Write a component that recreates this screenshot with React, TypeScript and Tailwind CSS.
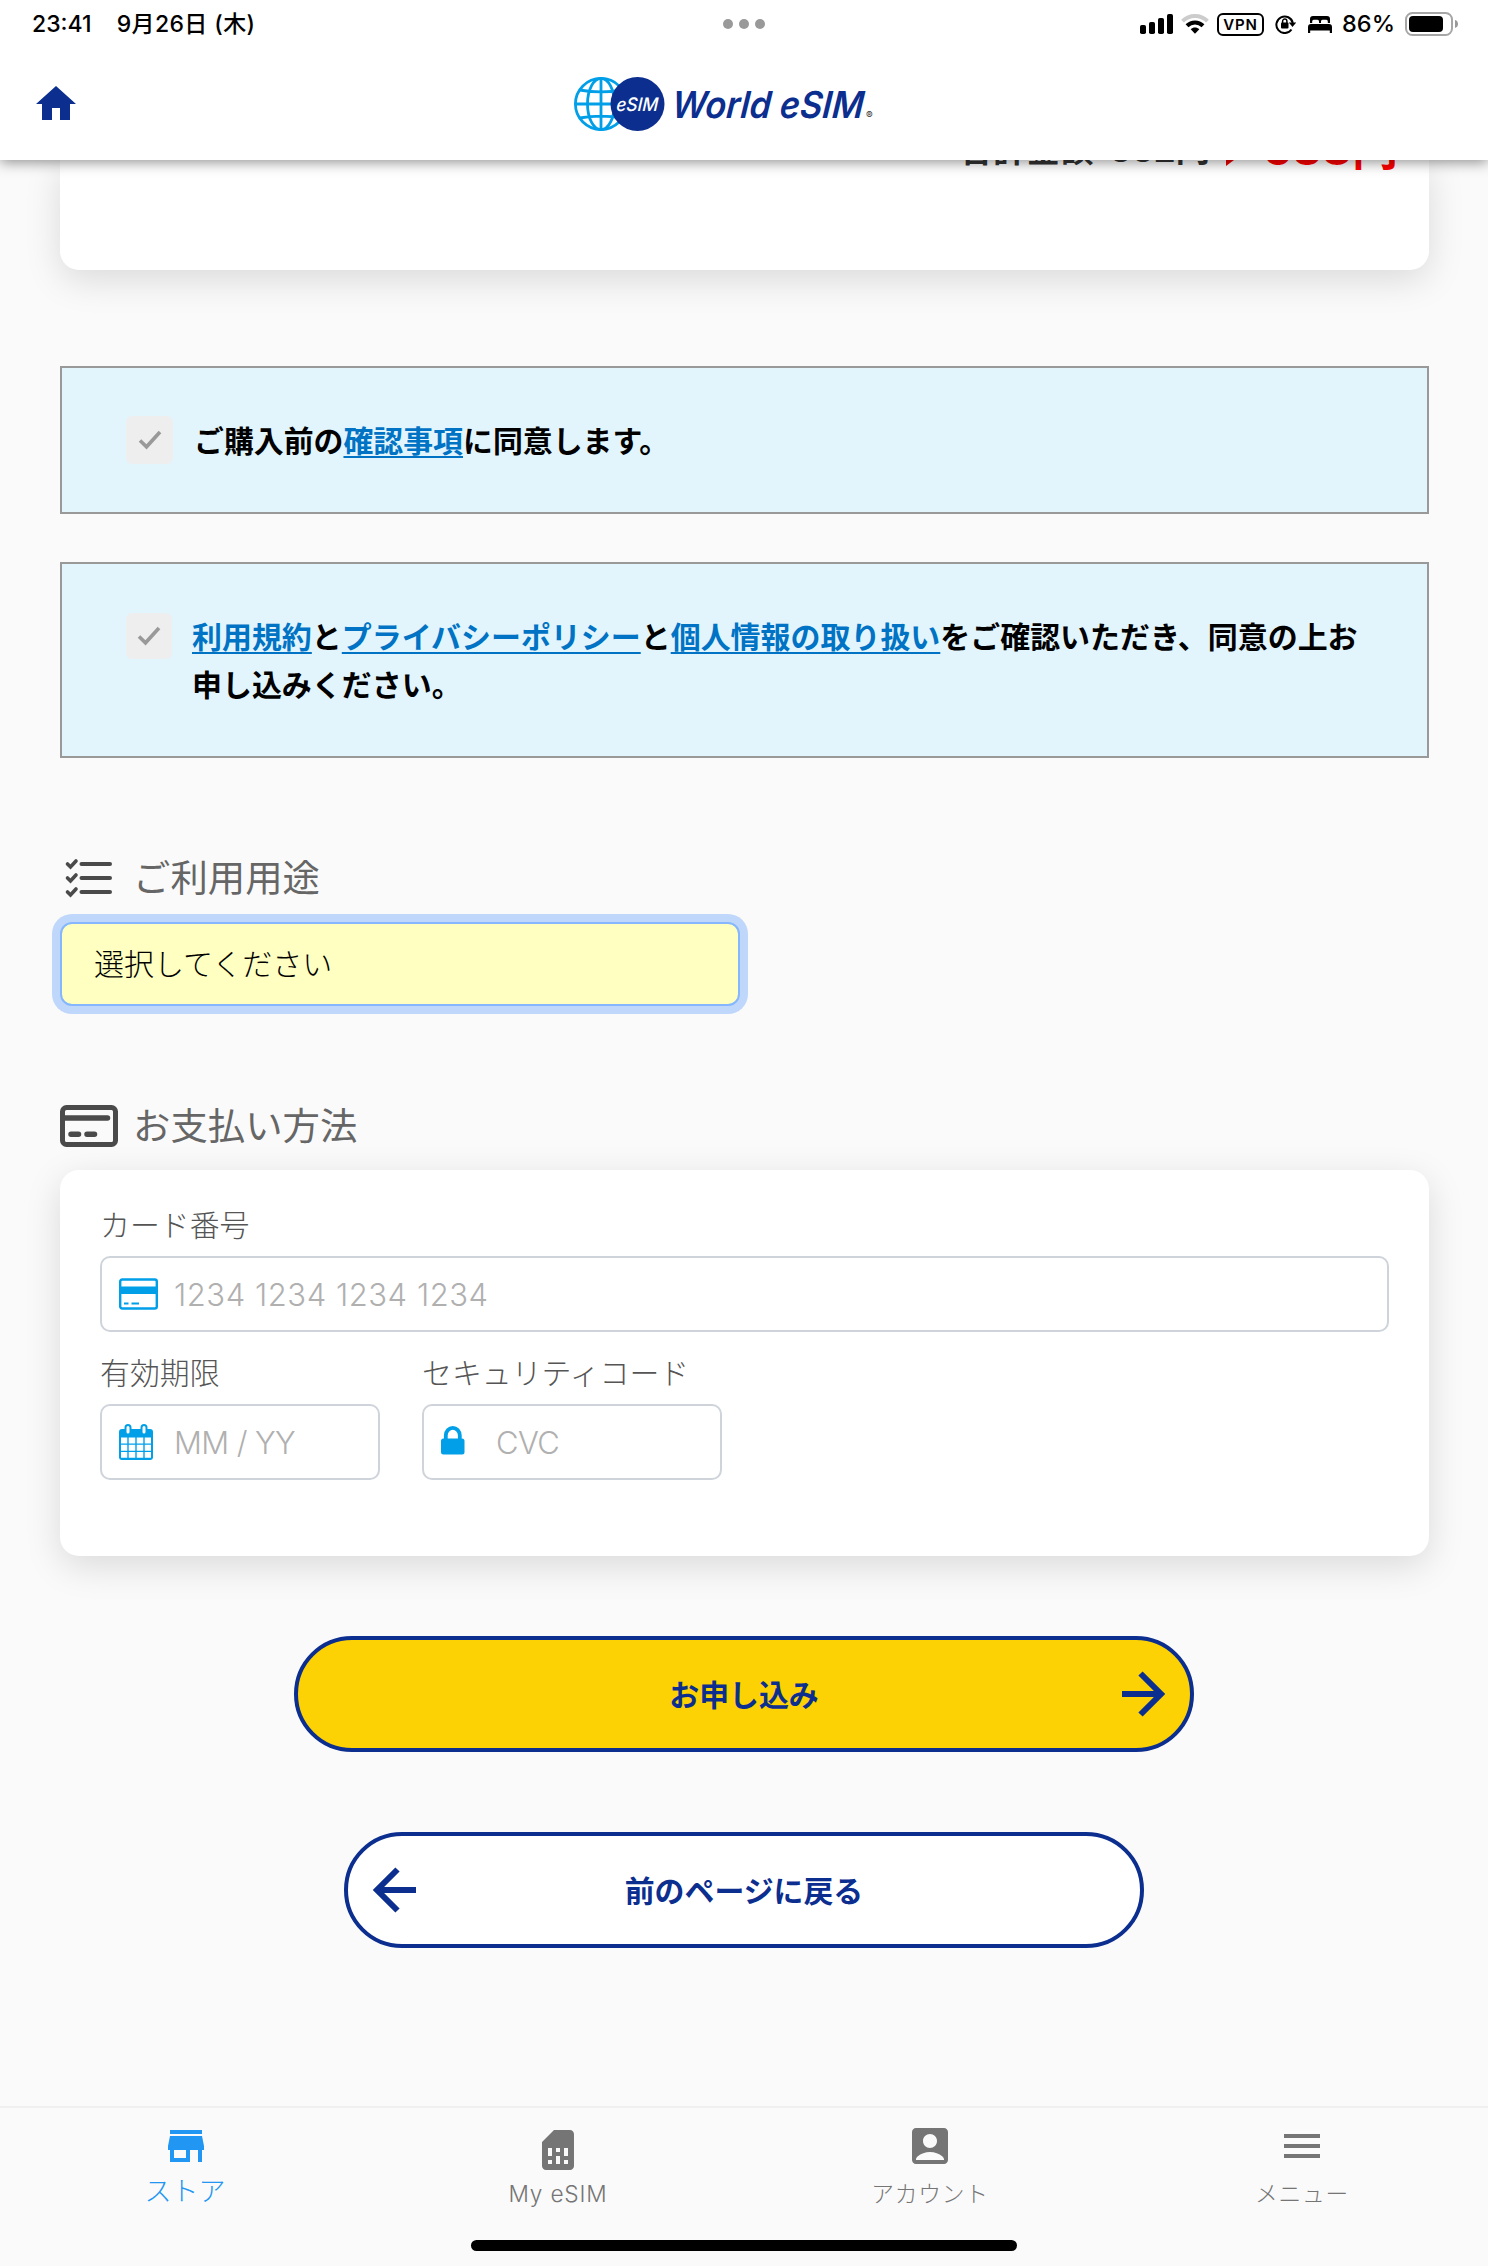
import React, { useState } from 'react';
import { MdHome, MdStore, MdSimCard, MdAccountBox, MdMenu } from 'react-icons/md';

const StatusBar = () => (
    <div className="flex h-12 items-center justify-between pl-8 pr-[29px] font-['Inter','Noto_Sans_CJK_JP',sans-serif] text-black">
        <div className="flex w-[506px] items-center gap-[25px] text-[23px] font-medium leading-none">
            <span>23:41</span>
            <span className="tracking-[0.4px]">9月26日 (木)</span>
        </div>
        <div className="flex gap-1.5">
            <span className="size-2.5 rounded-full bg-[#999]" />
            <span className="size-2.5 rounded-full bg-[#999]" />
            <span className="size-2.5 rounded-full bg-[#999]" />
        </div>
        <div className="flex w-[509px] items-center justify-end">
            <svg width="33" height="20" viewBox="0 0 33 20">
                <rect x="0" y="11" width="6" height="9" rx="1.8" />
                <rect x="9" y="8" width="6" height="12" rx="1.8" />
                <rect x="18" y="4" width="6" height="16" rx="1.8" />
                <rect x="27" y="0" width="6" height="20" rx="1.8" />
            </svg>
            <svg className="ml-2" width="28" height="20" viewBox="0 0 28 20" fill="none">
                <path d="M1.500 7.200C8.500.3 19.500.3 26.500 7.200" stroke="#ccc" strokeWidth="4" />
                <path d="M6 11.700C10.500 7.300 17.500 7.300 22 11.700" stroke="#000" strokeWidth="4" />
                <path d="M14 19.800l-4.300-4.600c2.400-2.200 6.200-2.200 8.600 0z" fill="#000" />
            </svg>
            <span className="ml-2 flex h-[23px] w-[47px] items-center justify-center rounded-[6px] border-2 border-black text-[15px] font-semibold leading-none tracking-[0.8px]">VPN</span>
            <svg className="ml-[11px]" width="21" height="20" viewBox="0 0 21 20" fill="none">
                <path d="M16.500 15.500A8.300 8.300 0 1 1 17.800 9" stroke="#000" strokeWidth="2" />
                <path d="M13.800 8.500H21.200L17.500 13z" fill="#000" />
                <rect x="6" y="8.500" width="7.500" height="6" rx="1" fill="#000" />
                <path d="M7.600 9V7.200a2.150 2.150 0 0 1 4.300 0V9" stroke="#000" strokeWidth="1.500" />
            </svg>
            <svg className="ml-3" width="24" height="17" viewBox="0 0 24 17">
                <path d="M2 7V3a3 3 0 0 1 3-3h14a3 3 0 0 1 3 3v4h-2.200V5.200a1.500 1.500 0 0 0-1.500-1.500h-3.800a1.500 1.500 0 0 0-1.500 1.500V7h-2V5.200a1.500 1.500 0 0 0-1.500-1.500H5.700a1.500 1.500 0 0 0-1.500 1.500V7z" />
                <path d="M0 17v-6a3 3 0 0 1 3-3h18a3 3 0 0 1 3 3v6h-2.200v-2.500H2.200V17z" />
            </svg>
            <span className="ml-2.5 text-[23.500px] font-medium leading-none">86%</span>
            <svg className="ml-2.5" width="54" height="24" viewBox="0 0 54 24">
                <rect x="1" y="1" width="46" height="22" rx="6.500" fill="none" stroke="#a6a6a6" strokeWidth="2" />
                <rect x="4" y="4" width="34" height="16" rx="4" />
                <path d="M50 8c2.200.6 3 2.200 3 4s-.8 3.400-3 4z" fill="#999" />
            </svg>
        </div>
    </div>
);

const Logo = () => (
    <svg width="304" height="56" viewBox="0 0 304 56">
        <g fill="none" stroke="#009fe8" strokeWidth="2.800">
            <circle cx="29" cy="28" r="25.600" />
            <ellipse cx="29" cy="28" rx="13.500" ry="25.600" />
            <path d="M29 2v52M3 28h52M7.500 14c13 2.300 30 2.300 43 0M7.500 42c13-2.300 30-2.300 43 0" />
        </g>
        <circle cx="65.500" cy="28" r="27" fill="#0b2e8f" />
        <text transform="translate(44 34.500) skewX(-4)" textLength="42" lengthAdjust="spacingAndGlyphs" className="fill-white font-['Inter',sans-serif] text-[18.500px] font-medium italic">eSIM</text>
        <text transform="translate(99 42) skewX(-5)" textLength="192" lengthAdjust="spacingAndGlyphs" className="fill-[#0b2e8f] font-['Inter',sans-serif] text-[37px] font-semibold italic">World eSIM</text>
        <text x="294" y="43" className="fill-[#333] font-['Inter',sans-serif] text-[10px]">®</text>
    </svg>
);

const CheckMark = ({ size }: { size: string }) => (
    <span className={`flex shrink-0 items-center justify-center rounded-md bg-[#eee] ${size}`}>
        <svg width="24" height="20" viewBox="0 0 24 20" fill="none" stroke="#999" strokeWidth="3.600">
            <path d="M2 10.500l6.500 6.300L22 2" />
        </svg>
    </span>
);

const ListIcon = () => (
    <svg width="58" height="44" viewBox="0 0 58 44" fill="none" stroke="#4a4a4a" strokeLinecap="round">
        <path d="M21.500 8h28.500M21.500 22h28.500M21.500 36h28.500" strokeWidth="4" />
        <path d="M7.500 8l3 3L16 5M7.500 22l3 3L16 19M7.500 36l3 3L16 33" strokeWidth="3.600" />
    </svg>
);

const PaymentIcon = () => (
    <svg width="58" height="42" viewBox="0 0 58 42" fill="none" stroke="#4a4a4a">
        <rect x="2.500" y="2.500" width="53" height="37" rx="4" strokeWidth="5" />
        <path d="M3 13h44.500" strokeWidth="5.500" strokeLinecap="round" />
        <path d="M11 29.200h7.500M27 29.200h7.500" strokeWidth="5.500" strokeLinecap="round" />
    </svg>
);

const CardIcon = () => (
    <svg width="39" height="32" viewBox="0 0 39 32" fill="none" stroke="#009fe8">
        <rect x="1.200" y="1.500" width="36.600" height="29" rx="2" strokeWidth="2.400" />
        <path d="M1 12.200h37" strokeWidth="7.500" />
        <path d="M5 25.500h4.500M12.500 25.500h7.500" strokeWidth="2.200" />
    </svg>
);

const CalendarIcon = () => (
    <svg width="34" height="36" viewBox="0 0 34 36" fill="none">
        <rect x="0" y="5" width="34" height="31" rx="3" fill="#009fe8" />
        <path d="M2 13.500h6.300v6H2zM9.700 13.500H16.300v6H9.700zM17.700 13.500h6.600v6h-6.600zM25.700 13.500H32v6h-6.300zM2 20.700h6.300v6H2zM9.700 20.700H16.300v6H9.700zM17.700 20.700h6.600v6h-6.600zM25.700 20.700H32v6h-6.300zM2 27.900h6.300v5.800H2zM9.700 27.900H16.300v5.800H9.700zM17.700 27.900h6.600v5.800h-6.600zM25.700 27.900H32v5.800h-6.300z" fill="#fff" />
        <rect x="6.500" y="1" width="5" height="9.500" rx="2.500" fill="#fff" stroke="#009fe8" strokeWidth="2" />
        <rect x="22.500" y="1" width="5" height="9.500" rx="2.500" fill="#fff" stroke="#009fe8" strokeWidth="2" />
    </svg>
);

const LockIcon = () => (
    <svg className="-mt-1" width="24" height="29" viewBox="0 0 24 29" fill="none">
        <rect x="0" y="12.500" width="23.500" height="16" rx="2.500" fill="#009fe8" />
        <path d="M4.800 14V9.500a7 7.600 0 0 1 14 0V14" stroke="#009fe8" strokeWidth="3.800" />
    </svg>
);

const Arrow = ({ left = false }: { left?: boolean }) => (
    <svg className={left ? 'rotate-180' : 'justify-self-end'} width="44" height="46" viewBox="0 0 44 46" fill="none" stroke="#0b2e8f">
        <path d="M0 23h40" strokeWidth="6" />
        <path d="M18.500 2.500L39 23L18.500 43.500" strokeWidth="6" />
    </svg>
);

interface FieldProps {
    label: string;
    placeholder: string;
    icon: React.ReactNode;
    width: string;
    spacing?: string;
}

const Field = ({ label, placeholder, icon, width, spacing = 'tracking-[-0.6px]' }: FieldProps) => (
    <label className={`flex flex-col gap-[9px] ${width}`}>
        <span className="whitespace-nowrap text-[29.9px] font-light leading-[48px] text-[#555]">{label}</span>
        <span className="flex h-[76px] items-center rounded-[10px] border-2 border-[#ced4da] bg-white pl-[17px]">
            <span className="flex w-[55px] shrink-0">{icon}</span>
            <input
                className={`w-full min-w-0 bg-transparent pt-0.5 font-['Inter',sans-serif] text-[31px] font-light outline-none placeholder:text-[#b0b0b0] ${spacing}`}
                placeholder={placeholder}
            />
        </span>
    </label>
);

const tabs = [
    { label: 'ストア', icon: MdStore },
    { label: 'My eSIM', icon: MdSimCard },
    { label: 'アカウント', icon: MdAccountBox },
    { label: 'メニュー', icon: MdMenu },
];

const App = () => {
    const [active, setActive] = useState('ストア');

    return (
        <div className="flex h-[2266px] w-[1488px] flex-col overflow-hidden bg-[#fafafa] font-['Noto_Sans_CJK_JP',sans-serif]">
            <header className="relative z-10 h-40 shrink-0 bg-white shadow-[0_2px_13px_rgba(0,0,0,0.45)]">
                <StatusBar />
                <div className="grid h-28 grid-cols-3 items-center pl-8 pr-[72px]">
                    <MdHome size={48} color="#0b2e8f" />
                    <div className="flex justify-center"><Logo /></div>
                </div>
            </header>

            <main className="flex flex-col pl-[60px] pr-[59px]">
                <div className="h-[110px] rounded-b-[19px] bg-white shadow-[0_10px_36px_rgba(0,0,0,0.13)]">
                    <div className="-mt-[39px] flex items-baseline justify-end pr-[31px] font-['Inter','Noto_Sans_CJK_JP',sans-serif] font-bold leading-[48px] text-[#333]">
                        <span className="mr-4 text-[33.500px]">合計金額</span>
                        <span className="text-[34.500px]">552円</span>
                        <svg className="ml-4 mr-[21px] translate-y-1" width="16" height="24" viewBox="0 0 16 24" fill="#f00000">
                            <path d="M0 0l16 12L0 24z" />
                        </svg>
                        <span className="translate-y-[3px] text-[46px] text-[#ff0000]">538円</span>
                    </div>
                </div>

                <div className="mt-24 flex h-[148px] items-center gap-[21px] border-2 border-[#999] bg-[#e2f5fd] pl-16 text-[29.9px] font-bold leading-[48px] text-black">
                    <CheckMark size="h-12 w-[47px]" />
                    <p className="-mt-[3px]">ご購入前の<a className="text-[#0073c4] underline decoration-2 underline-offset-4">確認事項</a>に同意します。</p>
                </div>

                <div className="mt-12 flex h-[196px] items-start gap-5 border-2 border-[#999] bg-[#e2f5fd] pl-16 pt-[49px] text-[29.960px] font-bold leading-[48px] text-black">
                    <CheckMark size="size-[46px]" />
                    <p className="-mt-0.5 w-[1176px]">
                        <a className="text-[#0073c4] underline decoration-2 underline-offset-4">利用規約</a>と
                        <a className="text-[#0073c4] underline decoration-2 underline-offset-4">プライバシーポリシー</a>と
                        <a className="text-[#0073c4] underline decoration-2 underline-offset-4">個人情報の取り扱い</a>をご確認いただき、同意の上お申し込みください。
                    </p>
                </div>

                <h2 className="mt-24 flex h-12 items-center gap-[15px] text-[37.400px] text-[#666]">
                    <ListIcon />
                    <span className="-mt-1 leading-[48px]">ご利用用途</span>
                </h2>
                <button className="mt-5 flex h-[84px] w-[680px] items-center rounded-xl border-2 border-[#86b7fe] bg-[#ffffc1] pb-[3px] pl-8 text-[30px] font-light text-black shadow-[0_0_0_8px_#bfd7fb]">
                    選択してください
                </button>

                <h2 className="mt-24 flex h-12 items-center gap-[15px] text-[37.400px] text-[#666]">
                    <PaymentIcon />
                    <span className="-mt-1 leading-[48px]">お支払い方法</span>
                </h2>
                <div className="mt-5 flex h-[386px] flex-col gap-[15px] rounded-[19px] bg-white px-10 pt-[29px] shadow-[0_10px_36px_rgba(0,0,0,0.13)]">
                    <Field label="カード番号" placeholder="1234 1234 1234 1234" icon={<CardIcon />} width="w-full" spacing="tracking-[0.55px]" />
                    <div className="flex gap-[42px]">
                        <Field label="有効期限" placeholder="MM / YY" icon={<CalendarIcon />} width="w-[280px]" />
                        <Field label="セキュリティコード" placeholder="CVC" icon={<LockIcon />} width="w-[300px]" />
                    </div>
                </div>

                <button className="ml-[234px] mt-20 grid h-[116px] w-[900px] grid-cols-[60px_1fr_60px] items-center rounded-full border-4 border-[#0b2e8f] bg-[#fcd204] px-6 text-[29.9px] font-bold text-[#0b2e8f]">
                    <span />
                    <span className="-mt-0.5">お申し込み</span>
                    <Arrow />
                </button>
                <button className="ml-[284px] mt-20 grid h-[116px] w-[800px] grid-cols-[60px_1fr_60px] items-center rounded-full border-4 border-[#0b2e8f] bg-white px-6 text-[29.9px] font-bold text-[#0b2e8f]">
                    <Arrow left />
                    <span className="-mt-0.5">前のページに戻る</span>
                    <span />
                </button>
            </main>

            <nav className="mt-auto flex h-[160px] shrink-0 flex-col border-t-2 border-[#f0f0f0] bg-[#fafafa]">
                <div className="grid h-[132px] grid-cols-4">
                    {tabs.map(({ label, icon: Icon }) => {
                        const selected = active === label;
                        return (
                            <button
                                key={label}
                                onClick={() => setActive(label)}
                                className={`flex flex-col items-center pt-3.5 font-['Inter','Noto_Sans_CJK_JP',sans-serif] font-light ${selected ? 'text-[#2196f3]' : 'text-[#757575]'}`}
                            >
                                <Icon size={48} className={label === 'My eSIM' ? 'mt-1 -mb-1' : ''} />
                                <span className={selected ? 'mt-0.5 pr-0.5 text-[27px] leading-10' : 'mt-1 text-[22.700px] leading-10 tracking-[0.8px]'}>{label}</span>
                            </button>
                        );
                    })}
                </div>
                <div className="mx-auto h-[11px] w-[546px] rounded-full bg-black" />
            </nav>
        </div>
    );
};

export default App;
